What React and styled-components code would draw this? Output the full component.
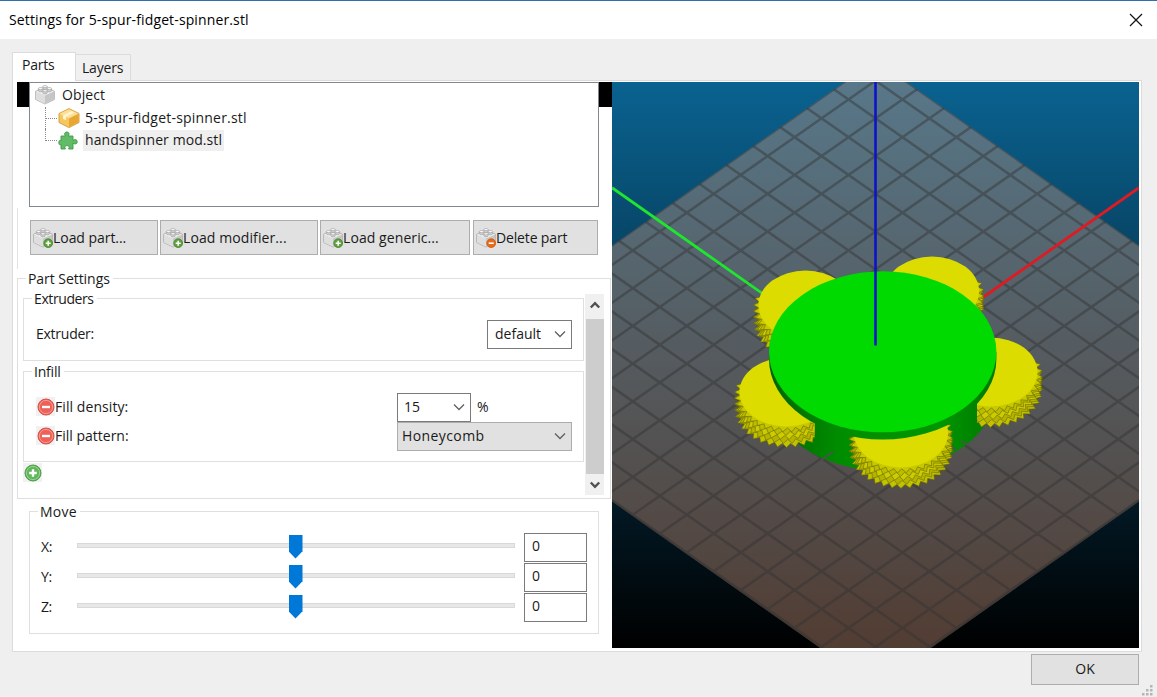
import React from "react";
import styled, { createGlobalStyle } from "styled-components";

const GlobalStyle = createGlobalStyle`
  * { box-sizing: border-box; }
  body {
    margin: 0;
    background: #efefef;
    color: #1a1a1a;
    font-family: "Open Sans", "Noto Sans", sans-serif;
    font-size: 14px;
    letter-spacing: -0.2px;
    line-height: 20px;
  }
`;

/* ---------- window frame ---------- */

const Window = styled.div`
  width: 1157px;
  height: 697px;
  display: flex;
  flex-direction: column;
  background: #efefef;
  overflow: hidden;
  white-space: nowrap;
`;

const TitleBar = styled.header`
  height: 39px;
  flex: none;
  display: flex;
  align-items: center;
  justify-content: space-between;
  padding: 0 14px 0 9px;
  background: #fff;
  border-top: 1px solid #2f6fb0;
  color: #000;
  letter-spacing: 0.13px;
`;

const TabStrip = styled.nav`
  height: 41px;
  flex: none;
  display: flex;
  align-items: flex-end;
  padding-left: 12px;
`;

const Tab = styled.div`
  width: ${(p) => p.$width}px;
  height: ${(p) => (p.$active ? 29 : 26)}px;
  margin-bottom: ${(p) => (p.$active ? -1 : 0)}px;
  padding: ${(p) => (p.$active ? "2px 0 0 9px" : "3px 0 0 6px")};
  background: ${(p) => (p.$active ? "#fff" : "#f0f0f0")};
  border: 1px solid #dcdcdc;
  border-left-width: ${(p) => (p.$active ? 1 : 0)}px;
  border-bottom: 0;
  position: relative;
`;

const Page = styled.main`
  width: 1130px;
  height: 572px;
  flex: none;
  margin-left: 12px;
  display: flex;
  background: #fff;
  border: 1px solid #dcdcdc;
  padding: 1px 2px 3px 4px;
`;

const LeftColumn = styled.section`
  width: 595px;
  flex: none;
  display: flex;
  flex-direction: column;
`;

const Footer = styled.footer`
  flex: 1;
  display: flex;
  justify-content: flex-end;
  padding: 2px 3px 0 0;
`;

const OkButton = styled.button`
  width: 108px;
  height: 31px;
  margin: 0 3px 0 0;
  padding: 0 0 1px;
  border: 1px solid #adadad;
  background: #e1e1e1;
  font: inherit;
  color: #1a1a1a;
`;

/* ---------- part tree ---------- */

const TreeArea = styled.div`
  height: 126px;
  display: flex;
`;

const BlackStrip = styled.div`
  width: ${(p) => p.$width}px;
  height: 25px;
  background: #000;
`;

const Tree = styled.div`
  width: 570px;
  height: 125px;
  border: 1px solid #828790;
  background: #fff;
  padding: 1px 0 0 5px;
`;

const TreeRow = styled.div`
  height: 22.7px;
  display: flex;
  align-items: center;
  gap: ${(p) => (p.$child ? 3 : 4)}px;
`;

const Branch = styled.i`
  width: 13px;
  height: 22.7px;
  margin-left: 10px;
  margin-right: -3px;
  flex: none;
  border-left: 1px dotted #8a8a8a;
  background: linear-gradient(90deg, #8a8a8a 50%, transparent 50%) 0 11px / 2px 1px repeat-x;
  ${(p) => p.$last && "height: 12px; margin-bottom: 11px;"}
`;

const ItemName = styled.span`
  height: 21px;
  padding: 0 2px;
  margin-left: ${(p) => p.$shift || 0}px;
  background: ${(p) => (p.$selected ? "#efefef" : "transparent")};
  letter-spacing: ${(p) => p.$track}px;
`;

const Toolbar = styled.div`
  height: 61px;
  display: flex;
  padding: 12px 0 0 12px;
  border-left: 1px solid #e2e2e2;
`;

const ToolButton = styled.button`
  width: ${(p) => p.$width}px;
  height: 35px;
  margin: 0 ${(p) => p.$gap}px 0 0;
  padding: 0 0 0 2px;
  display: flex;
  align-items: center;
  border: 1px solid #adadad;
  background: #e1e1e1;
  color: #1a1a1a;
  font: inherit;
  letter-spacing: ${(p) => p.$track}px;
`;

/* ---------- grouped settings ---------- */

const Group = styled.section`
  width: ${(p) => p.$width}px;
  height: ${(p) => p.$height}px;
  margin: ${(p) => p.$margin};
  border: 1px solid #dfdfdf;
  flex: none;
`;

const Legend = styled.div`
  width: max-content;
  height: 20px;
  margin: -10px 0 0 ${(p) => p.$left}px;
  padding: 0 3px 0 2px;
  background: #fff;
  letter-spacing: ${(p) => p.$track || -0.2}px;
`;

const ScrollArea = styled.div`
  display: flex;
  height: 201px;
  margin: 5px 0 0 5px;
  overflow: hidden;
`;

const ScrollContent = styled.div`
  width: 562px;
  flex: none;
`;

const ScrollBar = styled.div`
  width: 19px;
  height: 201px;
  display: flex;
  flex-direction: column;
  align-items: center;
  background: #f0f0f0;
`;

const ScrollArrow = styled.div`
  height: ${(p) => p.$height}px;
  padding-bottom: ${(p) => p.$lift || 0}px;
  display: flex;
  align-items: center;
`;

const ScrollThumb = styled.div`
  width: 18px;
  flex: 1;
  background: #cdcdcd;
`;

const OptionRow = styled.div`
  height: 29px;
  display: flex;
  align-items: center;
  padding-left: 12px;
  margin-top: ${(p) => p.$top || 0}px;
`;

const OptionName = styled.span`
  width: ${(p) => p.$width}px;
  flex: none;
  display: flex;
  align-items: center;
  margin-top: -2px;
  letter-spacing: ${(p) => p.$track}px;
`;

const Select = styled.div`
  width: ${(p) => p.$width}px;
  height: 29px;
  padding: 0 5px 1px ${(p) => p.$pad}px;
  display: flex;
  align-items: center;
  justify-content: space-between;
  background: ${(p) => (p.$flat ? "#e1e1e1" : "#fff")};
  border: 1px solid ${(p) => (p.$flat ? "#adadad" : "#7a7a7a")};
  letter-spacing: ${(p) => p.$track || 0}px;
`;

const Unit = styled.span`
  margin: -1px 0 0 6px;
`;

const AddRow = styled.div`
  height: 24px;
  padding: 1px 0 0 0;
`;

const IconPad = styled.span`
  width: 19px;
  height: 19px;
  background: #f1f1f1;
  display: grid;
  place-items: center;
`;

/* ---------- move sliders ---------- */

const Sliders = styled.div`
  padding-top: 10px;
`;

const SliderRow = styled.div`
  height: 30px;
  display: flex;
  align-items: center;
  padding-left: 11px;
`;

const AxisName = styled.span`
  width: 36px;
  letter-spacing: -0.4px;
`;

const Track = styled.div`
  width: 438px;
  height: 5px;
  margin-top: -4px;
  background: #e7e7e7;
  border: 1px solid #d9d9d9;
  display: flex;
  justify-content: center;
`;

const Thumb = styled.i`
  width: 14px;
  height: 24px;
  margin: -9px 1px 0 0;
  background: #0078d7;
  clip-path: polygon(0 0, 100% 0, 100% 70%, 50% 100%, 0 70%);
`;

const NumberBox = styled.div`
  width: 63px;
  height: 29px;
  margin-left: 9px;
  padding: 2px 7px;
  border: 1px solid #7a7a7a;
  background: #fff;
`;

const Viewport = styled.svg`
  width: 527px;
  height: 566px;
  display: block;
  flex: none;
`;

/* ---------- icons ---------- */

const Icon = styled.svg`
  display: block;
  flex: none;
`;

const CornerGrip = styled(Icon)`
  align-self: flex-end;
`;

const CloseIcon = () => (
  <Icon width="14" height="14" viewBox="0 0 14 14" stroke="#111" strokeWidth="1.2">
    <path d="M1 1 13 13M13 1 1 13" />
  </Icon>
);

const Chevron = ({ up, bold }) => (
  <Icon width="12" height="8" viewBox="0 0 12 8" fill="none" stroke={bold ? "#505050" : "#606060"} strokeWidth={bold ? 2.4 : 1.3}>
    <path d={bold ? (up ? "M1.8 6.5 6 2.2 10.2 6.5" : "M1.8 1.5 6 5.8 10.2 1.5") : "M1 1.5 6 6.5 11 1.5"} />
  </Icon>
);

const Brick = ({ badge }) => (
  <Icon width="20" height="20" viewBox="0 0 20 20">
    <path d="M.6 6.2 10 2l9.4 4.2v8.3L10 19 .6 14.5Z" fill="#f0f0f0" stroke="#a8a8a8" strokeWidth=".8" />
    <path d="M10 10.6 19 6.500v7.800L10 18.600Z" fill="#c6c6c6" />
    <path d="M1 6.500 10 10.600v8L1 14.300Z" fill="#dedede" />
    {[[10, 2.4], [5.6, 4.4], [14.4, 4.4], [10, 6.6]].map(([x, y]) => (
      <g key={`${x}-${y}`} stroke="#9c9c9c" strokeWidth=".6">
        <path d={`M${x - 2.2} ${y - 0.8}v2a2.200 1.200 0 0 0 4.400 0v-2`} fill="#d0d0d0" />
        <ellipse cx={x} cy={y - 0.8} rx="2.2" ry="1.1" fill="#fafafa" />
      </g>
    ))}
    {badge && (
      <g>
        <circle cx="15.200" cy="15.200" r="4.400" fill={badge === "add" ? "#5da23c" : "#ea6a16"} stroke={badge === "add" ? "#3d8028" : "#c4520c"} strokeWidth=".7" />
        <path d={badge === "add" ? "M12.700 15.200h5M15.200 12.700v5" : "M12.700 15.200h5"} stroke="#fff" strokeWidth="1.600" />
      </g>
    )}
  </Icon>
);

const PartIcon = () => (
  <Icon width="22" height="20" viewBox="0 0 22 20">
    <path d="M1 5.500 11 .6 21 5.500v9L11 19.600 1 14.500Z" fill="#f6c75f" stroke="#d39a35" strokeWidth=".9" />
    <path d="M1.500 5.700 11 1.200l9.500 4.500L11 10.400Z" fill="#fbdf96" />
    <path d="M11 10.400 20.600 5.800v8.500L11 19Z" fill="#e8a633" />
    <path d="M5 7.400 13.600 3l3 1.400L8 9v3.200l-3-1.500Z" fill="#fff3cf" />
  </Icon>
);

const ModifierIcon = () => (
  <Icon width="20" height="20" viewBox="0 0 20 20">
    <path
      d="M3 5h4.300C5.900 2.600 6.800 1 8.800 1s3 1.600 1.600 4H15v4.300c2.500-1.400 4.200-.5 4.200 1.500s-1.700 2.900-4.200 1.500V18h-4.400c1.200-2.200.2-3.400-1.600-3.400S6.200 15.800 7.400 18H3v-4.400C1.500 14.500.8 13.200.8 11.600S1.600 8.800 3 9.600Z"
      fill="#62bb66"
      stroke="#3f9c47"
      strokeWidth=".9"
    />
  </Icon>
);

const RoundIcon = ({ kind }) => (
  <Icon width="18" height="18" viewBox="0 0 18 18">
    <circle cx="9" cy="9" r="8" fill={kind === "add" ? "#5fb65b" : "#ee6058"} stroke={kind === "add" ? "#4d9e4a" : "#d6504a"} />
    <circle cx="9" cy="9" r="6.600" fill="none" stroke="#fff" strokeOpacity=".4" strokeWidth=".9" />
    <path d={kind === "add" ? "M5.200 9h7.600M9 5.200v7.600" : "M5 9h8"} stroke="#fff" strokeWidth="2.400" />
  </Icon>
);

const Grip = () => (
  <CornerGrip width="12" height="12" viewBox="0 0 12 12" fill="#b5b5b5">
    {[[8, 0], [8, 4], [4, 4], [8, 8], [4, 8], [0, 8]].map(([x, y]) => (
      <rect key={`${x}-${y}`} x={x} y={y} width="2.500" height="2.500" />
    ))}
  </CornerGrip>
);

/* ---------- 3D preview ---------- */

const SLOPE = 0.704;
const BED = { cx: 875.5, top: 60, bottom: 687 };
const bedHalf = (BED.bottom - BED.top) / 2;
const bedPoints = [
  [BED.cx, BED.top],
  [BED.cx + bedHalf / SLOPE, BED.top + bedHalf],
  [BED.cx, BED.bottom],
  [BED.cx - bedHalf / SLOPE, BED.top + bedHalf],
].map((p) => p.join(",")).join(" ");

const gridPath = Array.from({ length: 17 }, (_, i) => {
  const y = 80.6 + i * 37.75;
  return `M375.500 ${y + 500 * 0.7}L1375.500 ${y - 500 * 0.7}M375.500 ${y - 500 * 0.7}L1375.500 ${y + 500 * 0.7}`;
}).join("");

// Teeth are only visible on the near side; the far rim stays smooth.
const gearOutline = (cx, cy, outer, inner, phase, teeth = 36) =>
  Array.from({ length: teeth * 2 }, (_, i) => {
    const a = ((i + phase) * Math.PI) / teeth;
    const r = i % 2 || Math.sin(a) < -0.3 ? inner : outer;
    return `${(cx + r * Math.cos(a)).toFixed(1)},${(cy + r * 0.72 * Math.sin(a)).toFixed(1)}`;
  }).join(" ");

const gears = [
  { id: "back-left", cx: 805.5, cy: 305, clip: [740, 120] },
  { id: "back-right", cx: 932, cy: 291, clip: [880, 110] },
  { id: "left", cx: 786.5, cy: 392, clip: [730, 84.5] },
  { id: "right", cx: 990.5, cy: 372, clip: [977, 80] },
  { id: "front", cx: 901, cy: 433, clip: [840, 120] },
];

const Gear = ({ id, cx, cy, clip }) => (
  <g clipPath={`url(#gear-${id})`}>
    <clipPath id={`gear-${id}`}>
      <rect x={clip[0]} y="240" width={clip[1]} height="260" />
    </clipPath>
    {[18, 14, 10, 6, 2.5].map((dy, i) => (
      <polygon
        key={dy}
        points={gearOutline(cx, cy + dy, 52, 46.5, i * 0.7)}
        fill={["#c2c200", "#b4b400", "#cccc00", "#bcbc00", "#c8c800"][i]}
        stroke="#6a6a00"
        strokeWidth=".6"
      />
    ))}
    <ellipse cx={cx} cy={cy} rx="47" ry="34.500" fill="#dcdc00" />
  </g>
);

const Scene = () => (
  <Viewport viewBox="612 82 527 566">
    <defs>
      <linearGradient id="sky" x1="0" y1="0" x2="0" y2="1">
        <stop offset="0" stopColor="#0a6290" />
        <stop offset="1" stopColor="#000" />
      </linearGradient>
      <linearGradient id="body" x1="0" y1="0" x2="1" y2="0">
        <stop offset="0" stopColor="#006400" />
        <stop offset=".3" stopColor="#008c00" />
        <stop offset=".75" stopColor="#009600" />
        <stop offset="1" stopColor="#007800" />
      </linearGradient>
      <clipPath id="bed">
        <polygon points={bedPoints} />
      </clipPath>
    </defs>
    <rect x="612" y="82" width="527" height="566" fill="url(#sky)" />
    <polygon points={bedPoints} fill="#cc9980" fillOpacity=".4" />
    <g clipPath="url(#bed)" fill="none" stroke="#333" strokeOpacity=".45" strokeWidth="2.500">
      <path d={gridPath} />
      <polygon points={bedPoints} />
    </g>
    <path d="M612 187.700 875.500 373" stroke="#1ee62e" strokeWidth="2.800" />
    <path d="M1139 187.700 875.500 373" stroke="#e01a22" strokeWidth="2.800" />
    <path d="M769 352v38a113.700 80.500 0 0 0 227.400 0v-38Z" fill="url(#body)" />
    <path d="M821 460l12-8M961 441l9 5M956 450l-6-5" stroke="#4a544a" strokeWidth="1.800" />
    {gears.map((g) => (
      <Gear key={g.id} {...g} />
    ))}
    <path d="M769 352v7a113.700 80.500 0 0 0 227.400 0v-7Z" fill="url(#body)" />
    <ellipse cx="882.700" cy="351.800" rx="113.700" ry="80.500" fill="#00da00" />
    <path d="M875.500 82V345.500" stroke="#0a14c8" strokeWidth="2.600" />
  </Viewport>
);

const tools = [
  { label: "Load part...", width: 128, gap: 2, badge: "add", track: -0.05 },
  { label: "Load modifier...", width: 158, gap: 2, badge: "add", track: 0.1 },
  { label: "Load generic...", width: 150, gap: 3, badge: "add", track: 0.08 },
  { label: "Delete part", width: 125, gap: 0, badge: "remove", track: -0.15 },
];

export default function App() {
  return (
    <Window>
      <GlobalStyle />
      <TitleBar>
        <span>Settings for 5-spur-fidget-spinner.stl</span>
        <CloseIcon />
      </TitleBar>
      <TabStrip>
        <Tab $active $width={64}>Parts</Tab>
        <Tab $width={55}>Layers</Tab>
      </TabStrip>
      <Page>
        <LeftColumn>
          <TreeArea>
            <BlackStrip $width={12} />
            <Tree>
              <TreeRow>
                <Brick />
                <ItemName $track={0.1} $shift={1}>Object</ItemName>
              </TreeRow>
              <TreeRow $child>
                <Branch />
                <PartIcon />
                <ItemName $track={0.2}>5-spur-fidget-spinner.stl</ItemName>
              </TreeRow>
              <TreeRow $child>
                <Branch $last />
                <ModifierIcon />
                <ItemName $selected $track={0.08} $shift={2}>handspinner mod.stl</ItemName>
              </TreeRow>
            </Tree>
            <BlackStrip $width={13} />
          </TreeArea>
          <Toolbar>
            {tools.map((t) => (
              <ToolButton key={t.label} $width={t.width} $gap={t.gap} $track={t.track}>
                <Brick badge={t.badge} />
                {t.label}
              </ToolButton>
            ))}
          </Toolbar>
          <Group $width={594} $height={221} $margin="9px 0 0 0">
            <Legend $left={8} $track={-0.05}>Part Settings</Legend>
            <ScrollArea>
              <ScrollContent>
                <Group $width={561} $height={63} $margin="4px 0 0 0">
                  <Legend $left={8} $track={-0.4}>Extruders</Legend>
                  <OptionRow $top={11}>
                    <OptionName $width={451} $track={-0.25}>Extruder:</OptionName>
                    <Select $width={85} $pad={7}>default<Chevron /></Select>
                  </OptionRow>
                </Group>
                <Group $width={561} $height={91} $margin="10px 0 0 0">
                  <Legend $left={8}>Infill</Legend>
                  <OptionRow $top={11}>
                    <OptionName $width={361} $track={0.07}>
                      <IconPad><RoundIcon kind="remove" /></IconPad>
                      Fill density:
                    </OptionName>
                    <Select $width={74} $pad={6}>15<Chevron /></Select>
                    <Unit>%</Unit>
                  </OptionRow>
                  <OptionRow>
                    <OptionName $width={361} $track={0}>
                      <IconPad><RoundIcon kind="remove" /></IconPad>
                      Fill pattern:
                    </OptionName>
                    <Select $width={175} $pad={4} $flat $track={0.4}>Honeycomb<Chevron /></Select>
                  </OptionRow>
                </Group>
                <AddRow>
                  <IconPad><RoundIcon kind="add" /></IconPad>
                </AddRow>
              </ScrollContent>
              <ScrollBar>
                <ScrollArrow $height={25} $lift={3}><Chevron bold up /></ScrollArrow>
                <ScrollThumb />
                <ScrollArrow $height={21}><Chevron bold /></ScrollArrow>
              </ScrollBar>
            </ScrollArea>
          </Group>
          <Group $width={570} $height={123} $margin="12px 0 0 12px">
            <Legend $left={8} $track={0.25}>Move</Legend>
            <Sliders>
              {["X:", "Y:", "Z:"].map((axis) => (
                <SliderRow key={axis}>
                  <AxisName>{axis}</AxisName>
                  <Track><Thumb /></Track>
                  <NumberBox>0</NumberBox>
                </SliderRow>
              ))}
            </Sliders>
          </Group>
        </LeftColumn>
        <Scene />
      </Page>
      <Footer>
        <OkButton>OK</OkButton>
        <Grip />
      </Footer>
    </Window>
  );
}
